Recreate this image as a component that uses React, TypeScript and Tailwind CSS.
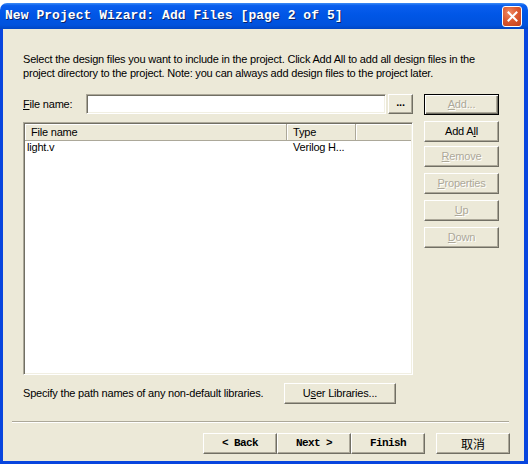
import React from "react";

const RAISED =
  "border border-t-white border-l-white border-r-[#716f64] border-b-[#716f64] shadow-[inset_-1px_-1px_0_#aca899] bg-[#ece9d8]";
const SUNKEN =
  "border border-t-[#aca899] border-l-[#aca899] border-r-white border-b-white shadow-[inset_1px_1px_0_#716f64,inset_-1px_-1px_0_#f1efe2]";
const DISABLED = "text-[#aca899] [text-shadow:1px_1px_0_#ffffff]";

function Btn({
  children,
  className = "",
  disabled = false,
}: {
  children: React.ReactNode;
  className?: string;
  disabled?: boolean;
}) {
  return (
    <div
      className={`${RAISED} flex items-center justify-center leading-none ${disabled ? DISABLED : "text-black"} ${className}`}
    >
      {children}
    </div>
  );
}

export default function App() {
  return (
    <div className="w-[528px] h-[464px] bg-white pt-[3px] flex flex-col overflow-hidden font-['Liberation_Sans',sans-serif] text-[11px] tracking-[-0.2px] text-black select-none">
      {/* title bar */}
      <div className="h-[26px] shrink-0 rounded-t-[7px] bg-[linear-gradient(to_bottom,#3d8cf5_0%,#0a5eee_10%,#0056e6_45%,#0052dd_85%,#0046c4_100%)] flex items-center justify-between pl-[5px] pr-[6px]">
        <span className="font-['Liberation_Mono',monospace] font-bold text-[13px] text-white tracking-[0.05px] [text-shadow:1px_1px_0_#0a246a]">
          New Project Wizard: Add Files [page 2 of 5]
        </span>
        <div className="w-[20px] h-[21px] rounded-[3px] border border-white bg-[radial-gradient(circle_at_35%_30%,#f08a64_0%,#dd5a30_45%,#c4401c_100%)] flex items-center justify-center">
          <svg width="11" height="11" viewBox="0 0 11 11">
            <path d="M1.5 1.5 L9.5 9.5 M9.5 1.5 L1.5 9.5" stroke="#ffffff" strokeWidth="2" strokeLinecap="square" />
          </svg>
        </div>
      </div>

      {/* frame */}
      <div className="flex-1 flex bg-[#0845de] pl-[3px] pr-[4px] pb-[3px]">
        <div className="flex-1 bg-[#ece9d8] flex flex-col pt-[23px] pl-[20px]">
          <p className="leading-[14px] whitespace-nowrap">
            Select the design files you want to include in the project. Click Add All to add all design files in the
            <br />
            project directory to the project. Note: you can always add design files to the project later.
          </p>

          {/* file name row */}
          <div className="flex items-start mt-[14px] h-[21px]">
            <span className="w-[63px] h-[20px] flex items-center">
              <span className="underline underline-offset-[1px]">F</span>ile name:
            </span>
            <div className={`${SUNKEN} w-[300px] h-[20px] bg-white`} />
            <Btn className="w-[25px] h-[20px] ml-[2px] font-bold text-[11px] pb-[3px]">...</Btn>
            <div className="w-[75px] h-[21px] ml-[11px] border border-black bg-[#ece9d8] shadow-[inset_1px_1px_0_#ffffff,inset_-1px_-1px_0_#716f64,inset_-2px_-2px_0_#aca899] flex items-center justify-center leading-none">
              <span className={DISABLED}>
                <span className="underline">A</span>dd...
              </span>
            </div>
          </div>

          {/* list + side buttons */}
          <div className="flex items-start mt-[6px]">
            <div className={`${SUNKEN} w-[390px] h-[253px] mt-[1px] bg-white p-[1px] flex flex-col`}>
              <div className="h-[17px] flex shrink-0">
                <div className="w-[262px] border-r border-b border-[#aca899] shadow-[inset_1px_1px_0_#ffffff] bg-[#ece9d8] pl-[6px] flex items-center">
                  File name
                </div>
                <div className="w-[69px] border-r border-b border-[#aca899] shadow-[inset_1px_1px_0_#ffffff] bg-[#ece9d8] pl-[6px] flex items-center">
                  Type
                </div>
                <div className="flex-1 border-b border-[#aca899] shadow-[inset_1px_1px_0_#ffffff] bg-[#ece9d8]" />
              </div>
              <div className="h-[13px] flex items-center">
                <span className="w-[262px] pl-[2px]">light.v</span>
                <span className="pl-[6px]">Verilog H...</span>
              </div>
            </div>

            <div className="flex flex-col ml-[11px] w-[75px]">
              <Btn className="h-[21px]">
                <span>
                  Add A<span className="underline">l</span>l
                </span>
              </Btn>
              <Btn className="h-[21px] mt-[4px]" disabled>
                <span>
                  <span className="underline">R</span>emove
                </span>
              </Btn>
              <Btn className="h-[21px] mt-[6px]" disabled>
                <span>
                  <span className="underline">P</span>roperties
                </span>
              </Btn>
              <Btn className="h-[21px] mt-[6px]" disabled>
                <span>
                  <span className="underline">U</span>p
                </span>
              </Btn>
              <Btn className="h-[21px] mt-[6px]" disabled>
                <span>
                  <span className="underline">D</span>own
                </span>
              </Btn>
            </div>
          </div>

          {/* libraries row */}
          <div className="flex items-center mt-[8px] h-[20px]">
            <span className="w-[261px]">Specify the path names of any non-default libraries.</span>
            <Btn className="w-[112px] h-[21px]">
              <span>
                U<span className="underline">s</span>er Libraries...
              </span>
            </Btn>
          </div>

          {/* separator */}
          <div className="-ml-[11px] w-[497px] h-[2px] mt-[18px] border-t border-b border-t-[#aca899] border-b-white" />

          {/* wizard buttons */}
          <div className="flex mt-[10px] ml-[180px] font-['Liberation_Mono',monospace] font-bold text-[11px] tracking-[-0.6px]">
            <Btn className="w-[74px] h-[21px]">&lt; Back</Btn>
            <Btn className="w-[74px] h-[21px]">Next &gt;</Btn>
            <Btn className="w-[74px] h-[21px]">Finish</Btn>
            <Btn className="w-[74px] h-[21px] ml-[11px] font-['Noto_Sans_CJK_SC',sans-serif] font-normal text-[12px] tracking-normal">
              取消
            </Btn>
          </div>
        </div>
      </div>
    </div>
  );
}
